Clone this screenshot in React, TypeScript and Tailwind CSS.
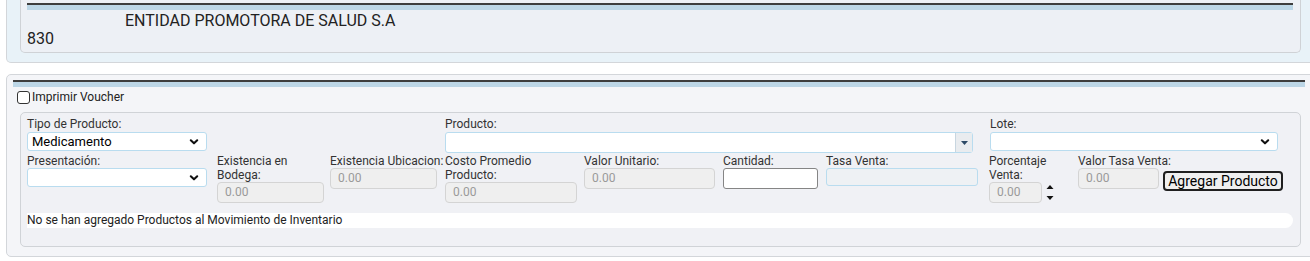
import React from "react";

function Chevron() {
  return (
    <svg width="10" height="7" viewBox="0 0 10 7" className="absolute right-[7px] top-1/2 -translate-y-1/2">
      <path d="M1.8 1.8 L5 4.8 L8.2 1.8" fill="none" stroke="#111" strokeWidth="2.1" strokeLinecap="round" strokeLinejoin="round" />
    </svg>
  );
}

function FakeSelect({ width, value }: { width: string; value?: string }) {
  return (
    <div className={`relative h-[19px] ${width} rounded-[3px] border border-[#b9dcef] bg-white`}>
      <span className="block pl-[4px] text-[13px] leading-[17px] text-black">{value}</span>
      <Chevron />
    </div>
  );
}

function Disabled({ width }: { width: string }) {
  return (
    <div className={`${width} h-[21px] rounded-[4px] border border-[#d4d4d4] bg-[#efefef] pl-[7px] text-[12px] leading-[19px] text-[#9a9a9a]`}>
      0.00
    </div>
  );
}

function Label({ children }: { children: React.ReactNode }) {
  return <div className="text-[12px] leading-[14px] text-[#333] whitespace-nowrap">{children}</div>;
}

export default function App() {
  return (
    <div className="w-[1310px] h-[261px] overflow-hidden bg-white font-['Roboto',sans-serif] text-[#333]">
      {/* Encabezado entidad */}
      <div className="ml-[6px] w-[1312px] border-x border-b border-[#d3d6da] rounded-b-[5px] bg-[#e8f2f8] pb-[9px]">
        <div className="ml-[13px] w-[1281px] border-x border-b border-[#cfd2d6] rounded-b-[5px] bg-[#edf0f5] pt-[3px] pb-[4px] pl-[6px]">
          <div className="w-[1266px] border-t-2 border-[#3d3d3d] h-[7px] bg-[#bcd6e6]" />
          <div className="mt-[2px] text-[16px] leading-[18px] text-[#222]">
            <div className="pl-[98px]">ENTIDAD PROMOTORA DE SALUD S.A</div>
            <div>830</div>
          </div>
        </div>
      </div>

      {/* Movimiento de inventario */}
      <div className="mt-[11px] ml-[6px] w-[1312px] border border-[#d3d6da] rounded-[5px] bg-[#f4f5f8] pt-[5px] pb-[9px] pl-[6px]">
        <div className="w-[1292px] border-t-2 border-[#3d3d3d] h-[7px] bg-[#bcd6e6]" />
        <label className="mt-[2px] flex h-[16px] items-center gap-[2px] pl-[4px] text-[12px] text-[#222]">
          <span className="h-[13px] w-[13px] rounded-[3px] border border-[#333] bg-white" />
          Imprimir Voucher
        </label>

        <div className="mt-[7px] ml-[7px] w-[1281px] border border-[#d0d3d7] rounded-[5px] bg-[#f0f1f5] px-[6px] pt-[4px] pb-[18px]">
          {/* fila 1 */}
          <div className="flex items-start">
            <div className="w-[418px]">
              <div className="text-[12px] leading-[15px]">Tipo de Producto:</div>
              <FakeSelect width="w-[180px]" value="Medicamento" />
            </div>
            <div className="w-[545px]">
              <div className="text-[12px] leading-[15px]">Producto:</div>
              <div className="flex h-[21px] w-[528px] rounded-[3px] border border-[#b9dcef] bg-white">
                <div className="flex-1" />
                <div className="flex w-[17px] items-center justify-center border-l border-[#c8d6e0] bg-[#e9ecef]">
                  <svg width="7" height="4" viewBox="0 0 7 4">
                    <path d="M0 0 H7 L3.5 4 Z" fill="#2d4a66" />
                  </svg>
                </div>
              </div>
            </div>
            <div>
              <div className="text-[12px] leading-[15px]">Lote:</div>
              <FakeSelect width="w-[288px]" />
            </div>
          </div>

          {/* fila 2 */}
          <div className="mt-[1px] flex items-start">
            <div className="w-[190px]">
              <Label>Presentación:</Label>
              <FakeSelect width="w-[180px]" />
            </div>
            <div className="w-[113px]">
              <Label>
                Existencia en
                <br />
                Bodega:
              </Label>
              <Disabled width="w-[107px]" />
            </div>
            <div className="w-[115px]">
              <Label>Existencia Ubicacion:</Label>
              <Disabled width="w-[107px]" />
            </div>
            <div className="w-[139px]">
              <Label>
                Costo Promedio
                <br />
                Producto:
              </Label>
              <Disabled width="w-[132px]" />
            </div>
            <div className="w-[139px]">
              <Label>Valor Unitario:</Label>
              <Disabled width="w-[131px]" />
            </div>
            <div className="w-[103px]">
              <Label>Cantidad:</Label>
              <div className="h-[21px] w-[95px] rounded-[3px] border border-[#858585] bg-white" />
            </div>
            <div className="w-[163px]">
              <Label>Tasa Venta:</Label>
              <div className="h-[18px] w-[152px] rounded-[3px] border border-[#b9dcef] bg-[#eef1f4]" />
            </div>
            <div className="w-[89px]">
              <Label>
                Porcentaje
                <br />
                Venta:
              </Label>
              <div className="flex items-center">
                <Disabled width="w-[53px]" />
                <svg width="8" height="17" viewBox="0 0 8 17" className="ml-[4px]">
                  <path d="M0.5 5 L4 1 L7.5 5 Z" fill="#111" />
                  <path d="M0.5 12 L4 16 L7.5 12 Z" fill="#111" />
                </svg>
              </div>
            </div>
            <div>
              <Label>Valor Tasa Venta:</Label>
              <div className="flex items-start">
                <Disabled width="w-[81px]" />
                <button className="ml-[4px] mt-[3px] h-[20px] w-[120px] rounded-[4px] border-2 border-[#1f1f1f] bg-[#efefef] text-[14px] leading-[16px] text-black">
                  Agregar Producto
                </button>
              </div>
            </div>
          </div>

          {/* mensaje */}
          <div className="mt-[10px] h-[15px] w-[1266px] rounded-r-[8px] bg-white text-[12px] leading-[15px] text-[#222]">
            No se han agregado Productos al Movimiento de Inventario
          </div>
        </div>
      </div>
    </div>
  );
}
